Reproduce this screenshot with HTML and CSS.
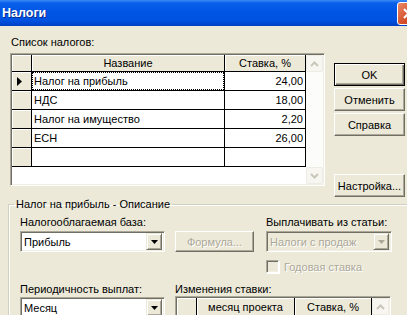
FILE: index.html
```html
<!DOCTYPE html>
<html lang="ru">

<head>
    <meta charset="UTF-8">
    <title>Налоги</title>
    <link rel="stylesheet" href="styles.css">
</head>

<body>

    <div class="window">
        <div class="titlebar">
            <span class="title">Налоги</span>
            <span class="close">
                <svg width="21" height="21" viewBox="0 0 21 21">
                    <path d="M6 6 L15 15 M15 6 L6 15" stroke="#fff" stroke-width="2.2" />
                </svg>
            </span>
        </div>

        <div class="content">
            <div class="top">
                <div class="list-panel">
                    <div class="label">Список налогов:</div>
                    <div class="grid-box tax-grid">
                        <div class="cells">
                            <div class="cell head ind"></div>
                            <div class="cell head">Название</div>
                            <div class="cell head">Ставка, %</div>

                            <div class="cell ind">
                                <svg width="5" height="9" viewBox="0 0 5 9">
                                    <polygon points="0,0 5,4.5 0,9" fill="#000" />
                                </svg>
                            </div>
                            <div class="cell name"><span class="focus">Налог на прибыль</span></div>
                            <div class="cell num">24,00</div>

                            <div class="cell ind"></div>
                            <div class="cell name">НДС</div>
                            <div class="cell num">18,00</div>

                            <div class="cell ind"></div>
                            <div class="cell name">Налог на имущество</div>
                            <div class="cell num">2,20</div>

                            <div class="cell ind"></div>
                            <div class="cell name">ЕСН</div>
                            <div class="cell num">26,00</div>

                            <div class="cell ind"></div>
                            <div class="cell name"></div>
                            <div class="cell num"></div>
                        </div>
                        <div class="vscroll">
                            <div class="sb-btn">
                                <svg width="9" height="6" viewBox="0 0 9 6">
                                    <path d="M1 5 L4.5 1.5 L8 5" stroke="#C9C7BA" stroke-width="2" fill="none" />
                                </svg>
                            </div>
                            <div class="sb-track"></div>
                            <div class="sb-btn">
                                <svg width="9" height="6" viewBox="0 0 9 6">
                                    <path d="M1 1 L4.5 4.5 L8 1" stroke="#C9C7BA" stroke-width="2" fill="none" />
                                </svg>
                            </div>
                        </div>
                    </div>
                </div>

                <div class="buttons">
                    <button class="btn default">OK</button>
                    <button class="btn">Отменить</button>
                    <button class="btn">Справка</button>
                    <button class="btn settings">Настройка...</button>
                </div>
            </div>

            <fieldset class="group">
                <legend>Налог на прибыль - Описание</legend>
                <div class="group-grid">
                    <div class="label">Налогооблагаемая база:</div>
                    <div></div>
                    <div class="label">Выплачивать из статьи:</div>

                    <div class="combo wide">
                        <span class="combo-text">Прибыль</span>
                        <span class="combo-btn">
                            <svg width="7" height="4" viewBox="0 0 7 4">
                                <polygon points="0,0 7,0 3.5,4" fill="#000" />
                            </svg>
                        </span>
                    </div>
                    <button class="btn formula" disabled>Формула...</button>
                    <div class="combo disabled">
                        <span class="combo-text">Налоги с продаж</span>
                        <span class="combo-btn">
                            <svg width="7" height="4" viewBox="0 0 7 4">
                                <polygon points="0,0 7,0 3.5,4" fill="#ACA899" />
                            </svg>
                        </span>
                    </div>

                    <div></div>
                    <div></div>
                    <label class="check disabled">
                        <span class="box"></span>
                        Годовая ставка
                    </label>

                    <div class="label">Периодичность выплат:</div>
                    <div class="label span2">Изменения ставки:</div>

                    <div class="combo wide month">
                        <span class="combo-text">Месяц</span>
                        <span class="combo-btn">
                            <svg width="7" height="4" viewBox="0 0 7 4">
                                <polygon points="0,0 7,0 3.5,4" fill="#000" />
                            </svg>
                        </span>
                    </div>
                    <div class="grid-box rate-grid span2">
                        <div class="cells">
                            <div class="cell head ind"></div>
                            <div class="cell head">месяц проекта</div>
                            <div class="cell head">Ставка, %</div>
                        </div>
                        <div class="vscroll">
                            <div class="sb-btn">
                                <svg width="9" height="6" viewBox="0 0 9 6">
                                    <path d="M1 5 L4.5 1.5 L8 5" stroke="#C9C7BA" stroke-width="2" fill="none" />
                                </svg>
                            </div>
                            <div class="sb-track"></div>
                        </div>
                    </div>
                </div>
            </fieldset>
        </div>
    </div>

</body>

</html>
```

FILE: styles.css
```css
html,
body {
    margin: 0;
    overflow: hidden;
}

body {
    width: 407px;
    height: 315px;
    background: #ECE9D8;
    font-family: 'Liberation Sans', sans-serif;
    font-size: 11px;
    color: #000;
}

.window {
    width: 407px;
    height: 315px;
    overflow: hidden;
}

/* title bar */

.titlebar {
    height: 26px;
    display: flex;
    align-items: center;
    padding-left: 2px;
    background: linear-gradient(#3D8BF6 0, #0A5FEA 3px, #0055E5 45%, #0052E0 80%, #003FC4 100%);
    overflow: hidden;
}

.title {
    color: #fff;
    font-weight: bold;
    font-size: 12.5px;
    text-shadow: 1px 1px #0A2B8C;
}

.close {
    margin-left: auto;
    margin-right: -13px;
    flex-shrink: 0;
    width: 21px;
    height: 21px;
    border: 1px solid #fff;
    border-radius: 3px;
    background: linear-gradient(135deg, #EB8A6A, #D5512B 55%, #C13E1A);
    display: flex;
}

/* content */

.content {
    padding-top: 10px;
}

.top {
    display: flex;
}

.list-panel {
    margin-left: 10px;
}

.label {
    height: 13px;
    line-height: 13px;
    white-space: nowrap;
}

.list-panel .label {
    margin-left: 1px;
    margin-bottom: 4px;
}

/* grids */

.grid-box {
    display: flex;
    box-sizing: border-box;
    background: #fff;
    border: 1px solid;
    border-color: #ACA899 #fff #fff #ACA899;
    box-shadow: inset 1px 1px #716F64, inset -1px -1px #F1EFE2;
    padding: 1px;
}

.tax-grid {
    width: 315px;
    height: 133px;
}

.cells {
    display: grid;
    align-content: start;
    flex: 1;
}

.tax-grid .cells {
    grid-template-columns: 20px 193px 81px;
    grid-template-rows: 17px repeat(5, 19px);
}

.rate-grid .cells {
    grid-template-columns: 20px 98px 77px;
    grid-template-rows: 19px;
}

.cell {
    box-sizing: border-box;
    border-right: 1px solid #000;
    border-bottom: 1px solid #000;
    display: flex;
    align-items: center;
    white-space: nowrap;
    overflow: hidden;
}

.cell.head {
    justify-content: center;
    background: #ECE9D8;
    box-shadow: inset 1px 1px #fff;
}

.cell.ind {
    background: #ECE9D8;
    box-shadow: inset 1px 1px #fff;
    padding-left: 5px;
}

.cell.name {
    padding-left: 2px;
}

.cell.num {
    justify-content: flex-end;
    padding-right: 2px;
}

.focus {
    align-self: stretch;
    flex: 1;
    display: flex;
    align-items: center;
    margin-left: -2px;
    padding-left: 2px;
    outline: 1px dotted #000;
    outline-offset: -1px;
}

.vscroll {
    width: 17px;
    display: flex;
    flex-direction: column;
    background: #FCFCFA;
}

.sb-btn {
    height: 17px;
    box-sizing: border-box;
    border: 1px solid #EEEDE5;
    border-radius: 2px;
    background: #F7F6F1;
    display: flex;
    align-items: center;
    justify-content: center;
}

.sb-track {
    flex: 1;
}

/* buttons */

.buttons {
    margin-left: 9px;
    margin-top: 27px;
    display: flex;
    flex-direction: column;
    gap: 2px;
}

.btn {
    width: 71px;
    height: 23px;
    padding: 0;
    box-sizing: border-box;
    font-family: inherit;
    font-size: 11px;
    color: #000;
    background: #ECE9D8;
    border: 1px solid;
    border-color: #fff #716F64 #716F64 #fff;
    box-shadow: inset -1px -1px #ACA899;
    white-space: nowrap;
}

.btn.default {
    border: 1px solid #000;
    box-shadow: inset 1px 1px #fff, inset -1px -1px #716F64, inset -2px -2px #ACA899;
}

.btn.settings {
    margin-top: 36px;
}

.btn.formula {
    width: 79px;
    height: 21px;
}

.btn:disabled,
.disabled {
    color: #ACA899;
    text-shadow: 1px 1px #fff;
}

/* group box */

.group {
    margin: 1px 0 0 8px;
    width: 420px;
    padding: 5px 0 0 11px;
    border: 1px solid #D0D0BF;
    box-shadow: inset 1px 1px #fff, 1px 1px #fff;
}

.group legend {
    margin-left: -6px;
    padding: 0 2px;
    line-height: 13px;
}

.group-grid {
    display: grid;
    grid-template-columns: 155px 91px 126px;
    grid-template-rows: 13px 21px 27px 13px auto;
    row-gap: 2px;
}

.span2 {
    grid-column: 2 / 4;
}

.group-grid .span2.label {
    align-self: end;
}

.combo {
    width: 126px;
    height: 21px;
    box-sizing: border-box;
    display: flex;
    align-items: center;
    background: #fff;
    border: 1px solid;
    border-color: #ACA899 #fff #fff #ACA899;
    box-shadow: inset 1px 1px #716F64, inset -1px -1px #F1EFE2;
    padding: 2px;
}

.combo.wide {
    width: 145px;
}

.combo.month {
    margin-top: -1px;
}

.combo.disabled {
    background: #ECE9D8;
}

.combo-text {
    flex: 1;
    padding-left: 1px;
}

.combo-btn {
    width: 16px;
    height: 17px;
    box-sizing: border-box;
    background: #ECE9D8;
    border: 1px solid;
    border-color: #ECE9D8 #716F64 #716F64 #ECE9D8;
    box-shadow: inset 1px 1px #fff, inset -1px -1px #ACA899;
    display: flex;
    align-items: center;
    justify-content: center;
    text-shadow: none;
}

.check {
    display: flex;
    align-items: center;
    gap: 5px;
    margin-top: 6px;
    align-self: start;
}

.check .box {
    width: 13px;
    height: 13px;
    box-sizing: border-box;
    border: 1px solid;
    border-color: #ACA899 #fff #fff #ACA899;
    box-shadow: inset 1px 1px #716F64, inset -1px -1px #F1EFE2, 1px 1px #fff;
    background: #ECE9D8;
}

.rate-grid {
    width: 216px;
    height: 40px;
    margin-top: -2px;
}
```
